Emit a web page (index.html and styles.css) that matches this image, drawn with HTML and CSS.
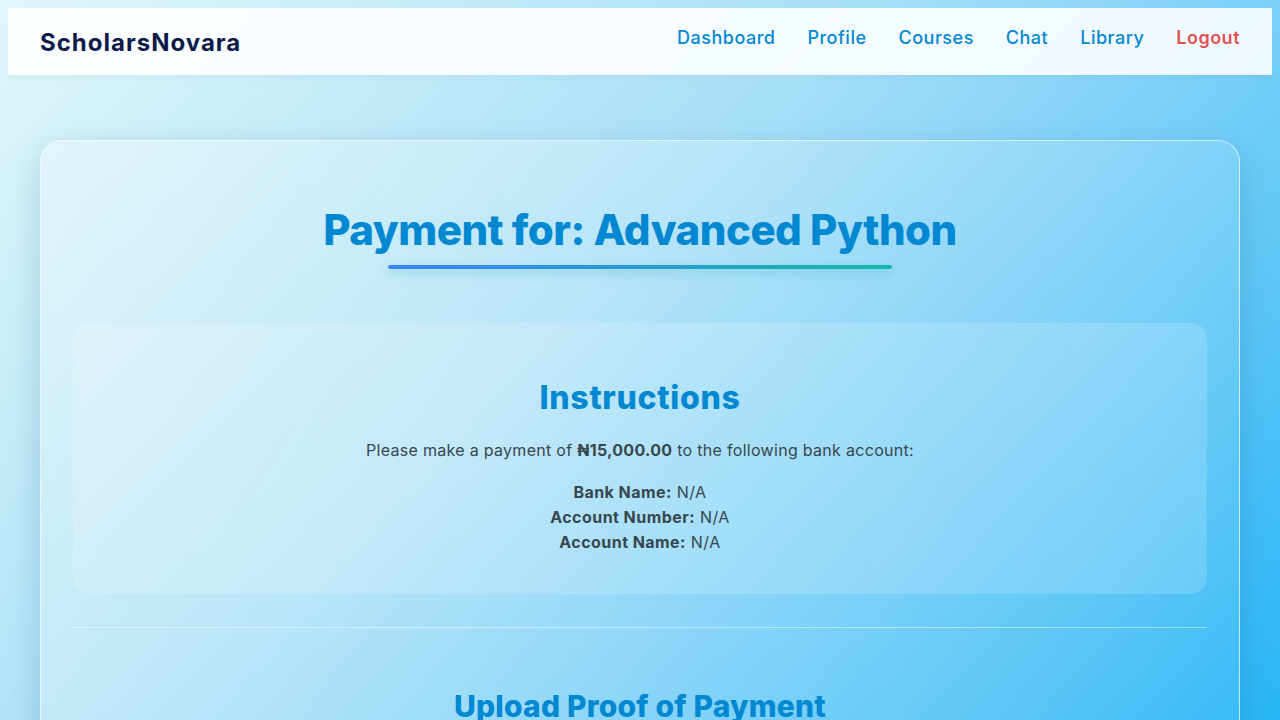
FILE: index.html
```html
<!DOCTYPE html>
<html lang="en">
<head>
<meta charset="utf-8">
<title>Payment - ScholarsNovara</title>
<link rel="stylesheet" href="styles.css">
</head>
<body>
<nav class="navbar">
  <a class="brand" href="#">ScholarsNovara</a>
  <ul class="nav-links">
    <li><a href="#">Dashboard</a></li>
    <li><a href="#">Profile</a></li>
    <li><a href="#">Courses</a></li>
    <li><a href="#">Chat</a></li>
    <li><a href="#">Library</a></li>
    <li><a href="#" class="logout">Logout</a></li>
  </ul>
</nav>
<main class="container">
  <section class="card">
    <h1 class="page-title">Payment for: Advanced Python</h1>
    <div class="instructions">
      <h2 class="section-title">Instructions</h2>
      <p class="lead">Please make a payment of <strong>₦15,000.00</strong> to the following bank account:</p>
      <p class="details">
        <strong>Bank Name:</strong> N/A<br>
        <strong>Account Number:</strong> N/A<br>
        <strong>Account Name:</strong> N/A
      </p>
    </div>
    <hr class="divider">
    <h2 class="section-title upload-title">Upload Proof of Payment</h2>
  </section>
</main>
</body>
</html>
```
FILE: styles.css
```css
html {
  min-height: 100%;
}
body {
  margin: 8px;
  min-height: 704px;
  font-family: Inter, "Noto Sans", sans-serif;
  color: #37474f;
  background: linear-gradient(135deg, #e0f7fa 0%, #a5def8 45%, #29b6f6 100%);
  background-attachment: fixed;
  overflow: hidden;
}
.navbar {
  display: flex;
  align-items: center;
  justify-content: space-between;
  height: 67px;
  padding: 0 32px;
  background: rgba(255, 255, 255, 0.88);
  box-shadow: 0 2px 8px rgba(0, 0, 0, 0.04);
}
.brand {
  font-size: 24px;
  font-weight: 700;
  color: #0d1b4a;
  text-decoration: none;
  letter-spacing: 1px;
  margin-top: 1px;
}
.nav-links {
  display: flex;
  gap: 32px;
  list-style: none;
  margin: 0;
  padding: 0;
  margin-top: -8px;
}
.nav-links a {
  font-size: 18px;
  font-weight: 500;
  letter-spacing: 0.5px;
  color: #0288d1;
  text-decoration: none;
}
.nav-links a.logout {
  color: #e05252;
  font-weight: 600;
}
.container {
  padding: 65px 32px 0;
}
.card {
  border-radius: 22px;
  border: 1px solid rgba(255, 255, 255, 0.6);
  background: linear-gradient(120deg, rgba(255, 255, 255, 0.3) 0%, rgba(255, 255, 255, 0.06) 100%);
  box-shadow: 0 10px 30px rgba(0, 60, 110, 0.18);
  padding: 64px 32px 40px;
}
.page-title {
  margin: 0 auto;
  width: max-content;
  font-size: 42px;
  font-weight: 800;
  color: #0288d1;
  text-align: center;
  line-height: 1.2;
  letter-spacing: -0.5px;
  padding-bottom: 14px;
}
.page-title::after {
  content: "";
  display: block;
  height: 4px;
  width: 504px;
  margin: 10px auto 0;
  border-radius: 2px;
  background: linear-gradient(90deg, #3b82f6, #14b8a6);
  box-shadow: 0 4px 10px rgba(20, 160, 180, 0.35);
}
.instructions {
  margin-top: 40px;
  border-radius: 16px;
  background: rgba(255, 255, 255, 0.16);
  padding: 56px 24px 39px;
  text-align: center;
}
.section-title {
  margin: 0 0 20px;
  font-size: 32px;
  font-weight: 800;
  color: #0288d1;
  line-height: 1.2;
  letter-spacing: 0.7px;
  text-align: center;
}
.lead {
  margin: 0 0 17px;
  font-size: 16px;
  line-height: 1.6;
  letter-spacing: 0.3px;
}
.details {
  margin: 0;
  font-size: 16px;
  line-height: 25px;
  letter-spacing: 0.45px;
}
strong {
  font-weight: 700;
}
.divider {
  border: 0;
  height: 1px;
  background: rgba(255, 255, 255, 0.45);
  margin: 33px 0 0;
}
.upload-title {
  margin-top: 60px;
  font-size: 30px;
  letter-spacing: 0.2px;
}
```
